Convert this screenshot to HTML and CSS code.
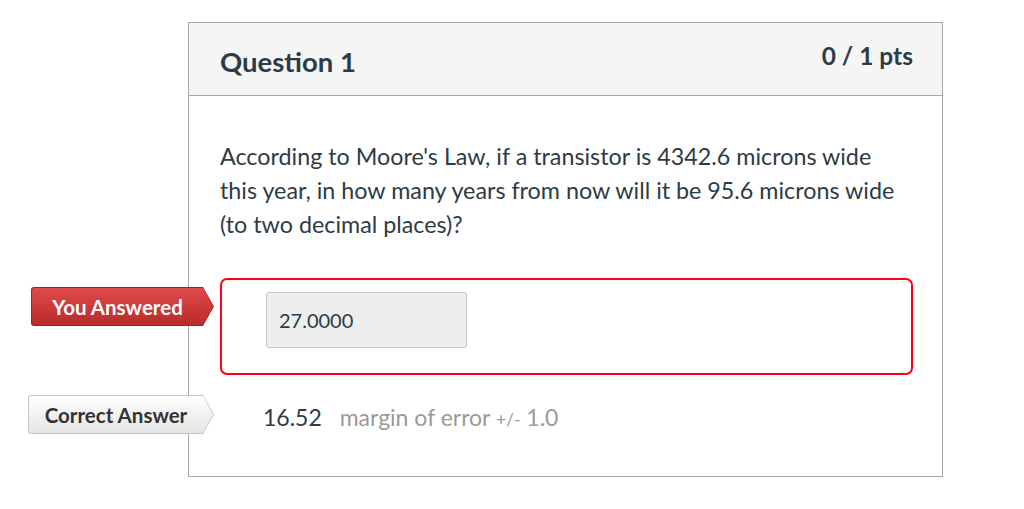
FILE: index.html
```html
<!DOCTYPE html>
<html>
<head>
<meta charset="utf-8">
<link rel="stylesheet" href="styles.css">
</head>
<body>
<div class="page">
  <div class="card">
    <div class="card-header">
      <h2 class="q-title">Question 1</h2>
      <div class="q-points">0 / 1 pts</div>
    </div>
    <div class="card-body">
      <p class="q-text">According to Moore's Law, if a transistor is 4342.6 microns wide this year, in how many years from now will it be 95.6 microns wide (to two decimal places)?</p>
      <div class="answer answer-wrong">
        <div class="tag tag-red"><span class="tag-inner">You Answered</span></div>
        <div class="answer-box">
          <div class="answer-input">27.0000</div>
        </div>
      </div>
      <div class="answer answer-correct">
        <div class="tag tag-gray"><span class="tag-inner">Correct Answer</span></div>
        <div class="answer-text">
          <span class="value">16.52</span>
          <span class="margin">margin of error <span class="pm">+/-</span> 1.0</span>
        </div>
      </div>
    </div>
  </div>
</div>
</body>
</html>
```

FILE: styles.css
```css
* { box-sizing: border-box; }
html, body { margin: 0; padding: 0; background: #fff; }
body {
  font-family: Lato, "Open Sans", sans-serif;
  color: #2d3b45;
}
.page {
  padding: 22px 0 0 188px;
}
.card {
  width: 755px;
  border: 1px solid #a8a8a8;
  background: #fff;
}
.card-header {
  height: 73px;
  background: #f5f5f5;
  border-bottom: 1px solid #a8a8a8;
  display: flex;
  justify-content: space-between;
  align-items: flex-start;
  padding: 18px 29px 0 31px;
}
.q-title {
  margin: 4px 0 0 0;
  font-size: 27.5px;
  font-weight: 700;
  line-height: 1.2;
}
.q-points {
  font-size: 24.5px;
  font-weight: 700;
  line-height: 1.2;
}
.card-body {
  padding: 43px 29px 42px 31px;
}
.q-text {
  margin: 0;
  font-size: 23.3px;
  line-height: 34px;
  width: 692px;
}
.answer {
  position: relative;
}
.answer-wrong {
  margin-top: 37px;
}
.answer-box {
  border: 2px solid #ff0015;
  border-radius: 7px;
  height: 97px;
  padding: 12px 0 0 44px;
}
.answer-input {
  width: 201px;
  height: 56px;
  background: #eeeeee;
  border: 1px solid #c8c8c8;
  border-radius: 3px;
  font-size: 20px;
  padding-left: 12px;
  display: flex;
  align-items: center;
}
.answer-correct {
  margin-top: 20px;
  height: 39px;
  display: flex;
  align-items: center;
}
.answer-text {
  padding-left: 43px;
  padding-top: 4px;
  font-size: 23px;
}
.answer-text .value {
  color: #2d3b45;
  margin-right: 12px;
}
.answer-text .margin {
  color: #9a9a9a;
}
.answer-text .pm {
  font-size: 17.5px;
}
.tag {
  position: absolute;
  height: 39px;
  clip-path: polygon(0 0, calc(100% - 11px) 0, 100% 50%, calc(100% - 11px) 100%, 0 100%);
  padding: 1px;
  border-radius: 3px 0 0 3px;
}
.tag-inner {
  display: flex;
  align-items: center;
  justify-content: center;
  height: 100%;
  font-size: 20.5px;
  font-weight: 700;
  clip-path: polygon(0 0, calc(100% - 10px) 0, 100% 50%, calc(100% - 10px) 100%, 0 100%);
  border-radius: 2px 0 0 2px;
  padding-right: 10px;
}
.tag-red {
  left: -189px;
  top: 9px;
  width: 183px;
  background: #a82222;
}
.tag-red .tag-inner {
  background: linear-gradient(#df4a4a, #b92b2b);
  color: #fff;
}
.tag-gray {
  left: -192px;
  top: 0;
  width: 186px;
  background: #c4c4c4;
}
.tag-gray .tag-inner {
  background: linear-gradient(#ffffff, #e4e4e4);
  color: #333;
}
```
